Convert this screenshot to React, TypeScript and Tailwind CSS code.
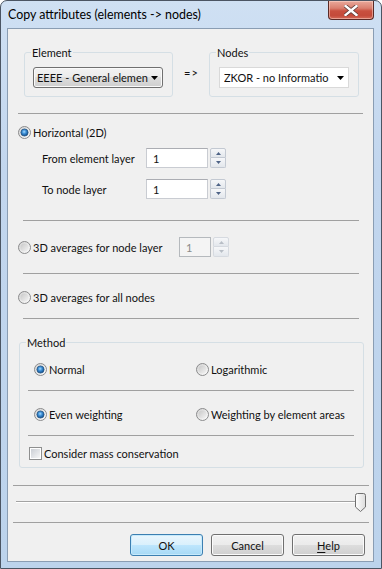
import React, { useId } from "react";

function Radio({ checked = false }: { checked?: boolean }) {
  const id = useId().replace(/:/g, "");
  return (
    <svg width="13" height="13" viewBox="0 0 13 13" className="shrink-0">
      <defs>
        <linearGradient id={`o${id}`} x1="0" y1="0" x2="1" y2="1">
          <stop offset="0" stopColor="#d2d2d2" />
          <stop offset="1" stopColor="#ffffff" />
        </linearGradient>
        <linearGradient id={`u${id}`} x1="0" y1="0" x2="1" y2="1">
          <stop offset="0" stopColor="#c8c8c8" />
          <stop offset="1" stopColor="#f4f4f4" />
        </linearGradient>
        <radialGradient id={`c${id}`} cx="0.45" cy="0.4" r="0.6">
          <stop offset="0" stopColor="#a6dcff" />
          <stop offset="0.45" stopColor="#3d8fd6" />
          <stop offset="1" stopColor="#0d4b8a" />
        </radialGradient>
      </defs>
      <circle cx="6.5" cy="6.5" r="6" fill={`url(#o${id})`} stroke="#8a8b8c" strokeWidth="1" />
      {checked ? (
        <circle cx="6.5" cy="6.5" r="3.6" fill={`url(#c${id})`} stroke="#2a5885" strokeWidth="0.8" />
      ) : (
        <circle cx="6.5" cy="6.5" r="4" fill={`url(#u${id})`} />
      )}
    </svg>
  );
}

function Checkbox() {
  return (
    <div className="w-[13px] h-[13px] shrink-0 border border-[#8e8f8f] bg-white p-[1px]">
      <div className="w-full h-full bg-gradient-to-br from-[#cbcfd5] to-[#f7f7f7]" />
    </div>
  );
}

function Spin({ disabled = false }: { disabled?: boolean }) {
  const arrow = disabled ? "#b8bec6" : "#4e6386";
  const border = disabled ? "border-[#d6dae0]" : "border-[#c3c9d2]";
  return (
    <div className="flex flex-col w-[16px] h-[20px] gap-0">
      <div className={`h-[10px] border ${border} rounded-t-[2px] bg-gradient-to-b from-[#f6f7f9] to-[#e3e7ec] flex items-center justify-center`}>
        <svg width="5" height="3" viewBox="0 0 5 3"><path d="M0 3 L2.5 0 L5 3 Z" fill={arrow} /></svg>
      </div>
      <div className={`h-[10px] border border-t-0 ${border} rounded-b-[2px] bg-gradient-to-b from-[#f6f7f9] to-[#e3e7ec] flex items-center justify-center`}>
        <svg width="5" height="3" viewBox="0 0 5 3"><path d="M0 0 L2.5 3 L5 0 Z" fill={arrow} /></svg>
      </div>
    </div>
  );
}

function DownArrow() {
  return (
    <svg width="7" height="4" viewBox="0 0 7 4" className="shrink-0">
      <path d="M0 0 H7 L3.5 4 Z" fill="#000" />
    </svg>
  );
}

function Sep({ className }: { className: string }) {
  return <div className={`h-px bg-[#a0a0a0] ${className}`} />;
}

function Group({ label, className, children }: { label: string; className: string; children?: React.ReactNode }) {
  return (
    <div className={`relative rounded-[3px] border border-[#d5dfe5] shrink-0 ${className}`}>
      <span className="absolute -top-[8px] left-[6px] bg-[#f0f0f0] px-[1px] leading-[15px] whitespace-nowrap">{label}</span>
      {children}
    </div>
  );
}

function Button({ label, primary = false }: { label: React.ReactNode; primary?: boolean }) {
  return (
    <div
      className={`w-[73px] h-[22px] rounded-[3px] border flex items-center justify-center ${
        primary
          ? "border-[#3c7fb1] bg-[linear-gradient(#eaf6fd_0%,#d9f0fc_50%,#bee6fd_50%,#a7d9f5_100%)] shadow-[inset_0_0_0_1px_#c6eafc]"
          : "border-[#707070] bg-[linear-gradient(#f2f2f2_0%,#ebebeb_50%,#dddddd_50%,#cfcfcf_100%)] shadow-[inset_0_0_0_1px_#fbfbfb]"
      }`}
    >
      {label}
    </div>
  );
}

export default function App() {
  return (
    <div className="w-[382px] h-[569px] flex flex-col rounded-t-[7px] border border-[#4b5563] bg-[linear-gradient(180deg,#cfe0f3_0%,#c2d6ee_30%,#bcd3ec_100%)] font-['Lato',sans-serif] text-[11px] leading-[15px] text-[#111111] overflow-hidden relative">
      {/* Title bar */}
      <div className="h-[27px] shrink-0 flex items-center pl-[7px] text-[12.4px] text-black">
        Copy attributes (elements -&gt; nodes)
      </div>
      <div className="absolute top-0 right-[7px] w-[46px] h-[19px] rounded-b-[4px] border border-t-0 border-[#5a2a26] bg-[linear-gradient(180deg,#e9a99b_0%,#d97f6f_40%,#c9503f_55%,#c44a3a_80%,#d46a58_100%)] shadow-[inset_0_0_0_1px_rgba(255,220,210,0.5)] flex items-center justify-center">
        <svg width="14" height="11" viewBox="0 0 14 11">
          <path d="M1.5 1 L12.5 10 M12.5 1 L1.5 10" stroke="#5b3a36" strokeWidth="4" strokeLinecap="square" />
          <path d="M1.5 1 L12.5 10 M12.5 1 L1.5 10" stroke="#ffffff" strokeWidth="2.4" strokeLinecap="square" />
        </svg>
      </div>

      {/* Client area */}
      <div className="flex-1 ml-[6px] mr-[7px] mb-[6px] border border-[#8a9db3] bg-[#f0f0f0] flex flex-col">
        {/* Top row */}
        <div className="mt-[23px] flex items-start">
          <Group label="Element" className="ml-[16px] w-[149px] h-[45px]">
            <div className="ml-[8px] mt-[14px] w-[130px] h-[21px] rounded-[3px] border border-[#707070] bg-[linear-gradient(#f2f2f2_0%,#ebebeb_50%,#dddddd_50%,#cfcfcf_100%)] shadow-[inset_0_0_0_1px_#fafafa] flex items-center pl-[3px]">
              <span className="w-[108px] whitespace-nowrap">EEEE - General elemen</span>
              <span className="ml-[6px] flex"><DownArrow /></span>
            </div>
          </Group>
          <span className="w-[36px] shrink-0 pl-[11px] mt-[13px] leading-[15px] tracking-[1px]">=&gt;</span>
          <Group label="Nodes" className="w-[150px] h-[45px]">
            <div className="ml-[9px] mt-[14px] w-[130px] h-[21px] border border-[#d9d9d9] bg-white flex items-center pl-[4px]">
              <span className="w-[105px] overflow-hidden whitespace-nowrap">ZKOR - no Informatio</span>
              <span className="ml-[8px] flex"><DownArrow /></span>
            </div>
          </Group>
        </div>

        <Sep className="mt-[16px] ml-[10px] w-[345px]" />

        {/* Horizontal */}
        <div className="mt-[11px] h-[15px] ml-[10px] flex items-center gap-[2px]">
          <Radio checked />
          <span>Horizontal (2D)</span>
        </div>
        <div className="mt-[8px] h-[20px] ml-[34px] flex items-center">
          <span className="w-[104px] shrink-0">From element layer</span>
          <div className="w-[62px] h-[20px] border border-[#c9ccd2] border-t-[#abadb3] bg-white flex items-center pl-[6px]">1</div>
          <div className="ml-[2px]"><Spin /></div>
        </div>
        <div className="mt-[11px] h-[20px] ml-[34px] flex items-center">
          <span className="w-[104px] shrink-0">To node layer</span>
          <div className="w-[62px] h-[20px] border border-[#c9ccd2] border-t-[#abadb3] bg-white flex items-center pl-[6px]">1</div>
          <div className="ml-[2px]"><Spin /></div>
        </div>

        <Sep className="mt-[21px] ml-[15px] w-[336px]" />

        {/* 3D node layer */}
        <div className="mt-[16px] h-[20px] ml-[10px] flex items-center">
          <div className="w-[161px] shrink-0 flex items-center gap-[2px]">
            <Radio />
            <span>3D averages for node layer</span>
          </div>
          <div className="w-[32px] h-[20px] border border-[#b5b9bd] bg-[#f4f4f4] flex items-center pl-[6px] text-[#8a8a8a]">1</div>
          <div className="ml-[2px]"><Spin disabled /></div>
        </div>

        <Sep className="mt-[16px] ml-[15px] w-[336px]" />

        <div className="mt-[16px] h-[15px] ml-[10px] flex items-center gap-[2px]">
          <Radio />
          <span>3D averages for all nodes</span>
        </div>

        <Sep className="mt-[13px] ml-[15px] w-[336px]" />

        {/* Method */}
        <Group label="Method" className="mt-[23px] ml-[11px] w-[345px] h-[126px]">
          <div className="flex flex-col">
            <div className="mt-[19px] h-[15px] ml-[14px] flex items-center">
              <div className="w-[162px] shrink-0 flex items-center gap-[2px]">
                <Radio checked />
                <span>Normal</span>
              </div>
              <div className="flex items-center gap-[2px]">
                <Radio />
                <span>Logarithmic</span>
              </div>
            </div>
            <Sep className="mt-[13px] ml-[8px] w-[326px]" />
            <div className="mt-[16px] h-[15px] ml-[14px] flex items-center">
              <div className="w-[162px] shrink-0 flex items-center gap-[2px]">
                <Radio checked />
                <span>Even weighting</span>
              </div>
              <div className="flex items-center gap-[2px]">
                <Radio />
                <span>Weighting by element areas</span>
              </div>
            </div>
            <Sep className="mt-[13px] ml-[8px] w-[326px]" />
            <div className="mt-[10px] h-[15px] ml-[9px] flex items-center gap-[2px]">
              <Checkbox />
              <span>Consider mass conservation</span>
            </div>
          </div>
        </Group>

        <Sep className="mt-[17px] ml-[5px] w-[356px]" />

        {/* Slider */}
        <div className="mt-[6px] h-[20px] ml-[8px] w-[350px] flex items-start">
          <div className="flex-1 mt-[9px] h-[2px] border-t border-[#a3a3a3] border-b border-b-[#ffffff]" />
          <svg width="11" height="19" viewBox="0 0 11 19" className="mt-[1px] shrink-0">
            <defs>
              <linearGradient id="thumbg" x1="0" y1="0" x2="1" y2="0">
                <stop offset="0" stopColor="#ffffff" />
                <stop offset="1" stopColor="#dcdcdc" />
              </linearGradient>
            </defs>
            <path d="M0.5 2.5 Q0.5 0.5 2.5 0.5 H8.5 Q10.5 0.5 10.5 2.5 V14 L5.5 18.5 L0.5 14 Z" fill="url(#thumbg)" stroke="#6f6f6f" strokeWidth="1" />
          </svg>
        </div>

        <Sep className="mt-[10px] ml-[5px] w-[356px]" />

        {/* Buttons */}
        <div className="mt-[11px] flex justify-end gap-[8px] pr-[8px]">
          <Button label="OK" primary />
          <Button label="Cancel" />
          <Button label={<span><span className="underline underline-offset-2">H</span>elp</span>} />
        </div>
      </div>
    </div>
  );
}
